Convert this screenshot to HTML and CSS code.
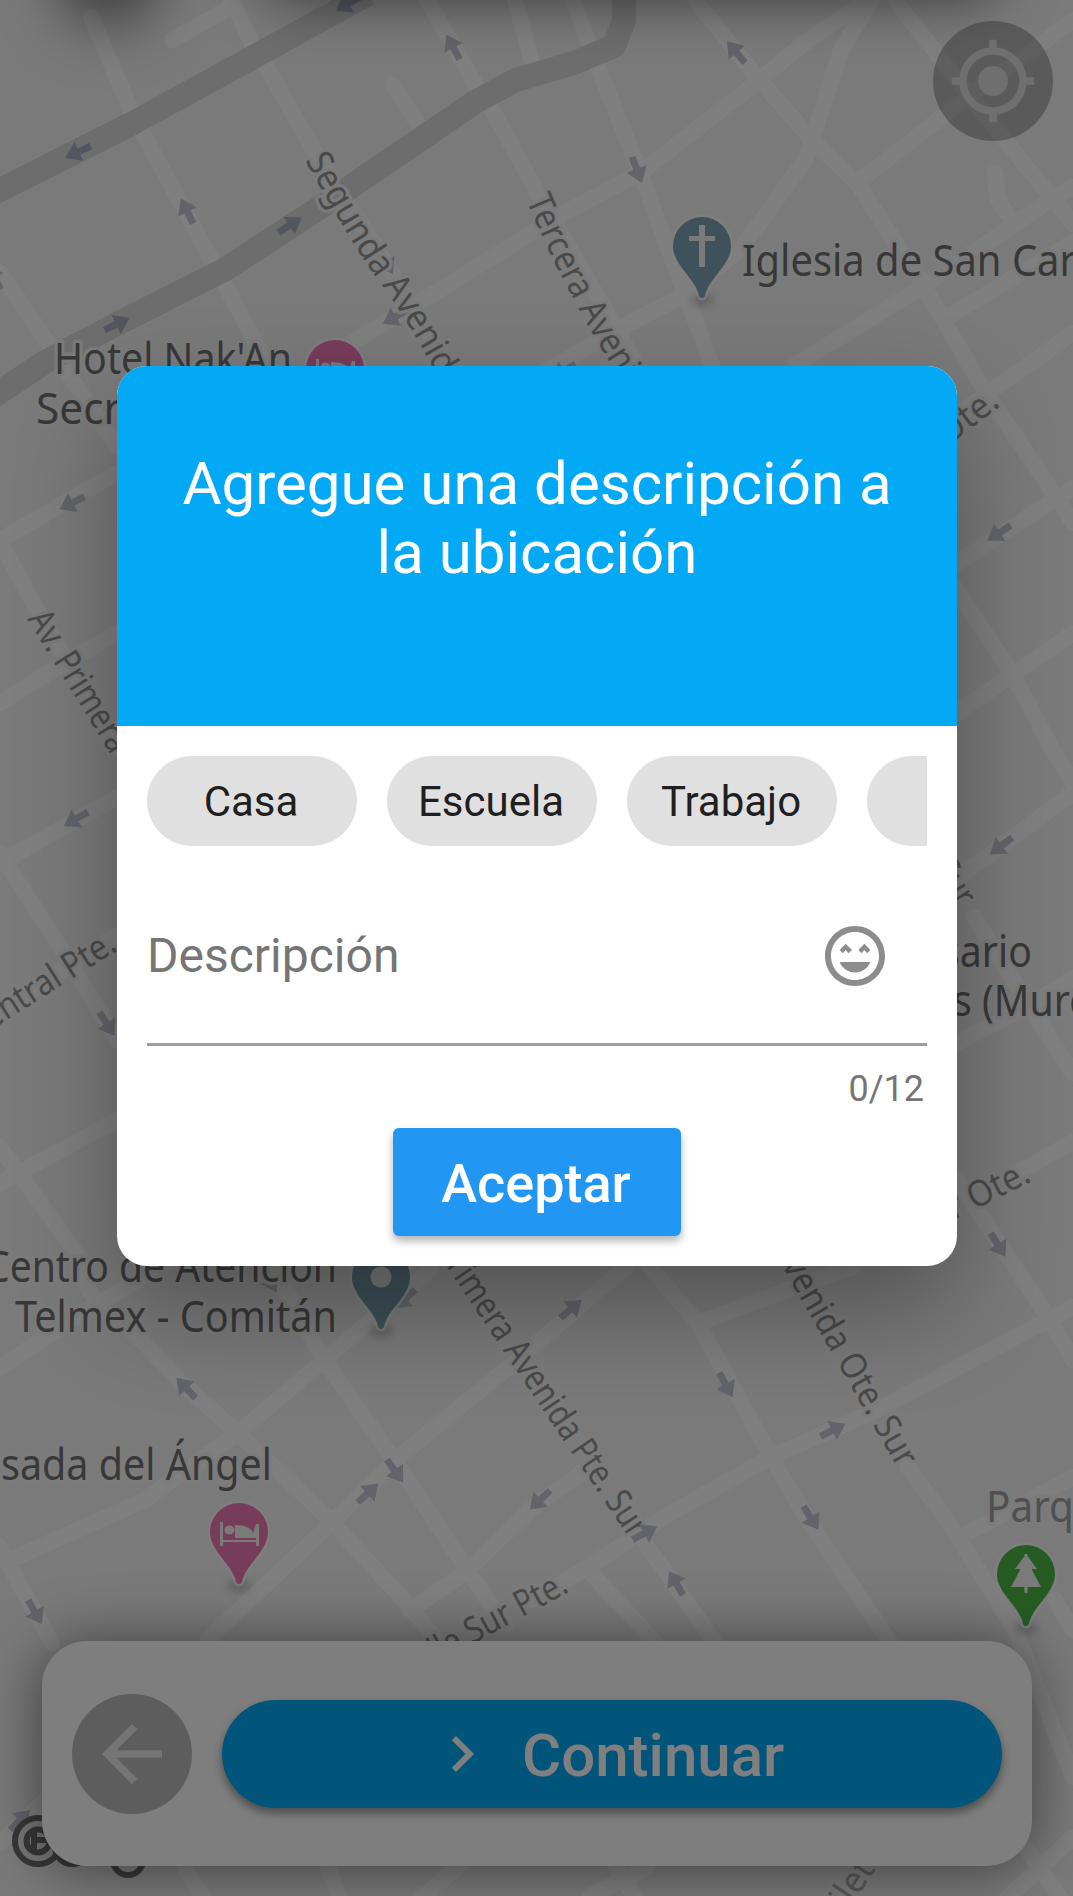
FILE: index.html
```html
<!DOCTYPE html>
<html lang="es">
<head>
<meta charset="utf-8">
<title>Agregar ubicación</title>
<link rel="stylesheet" href="styles.css">
</head>
<body>
<div class="screen">
  <svg class="map" viewBox="0 0 1073 1896" width="1073" height="1896">
    <defs>
      <path id="arrow" d="M-14-3.5H-1V-10.500L14 0L-1 10.500V3.500H-14z"/>
      <path id="pin" d="M0 0C-3 0-3-3-4-6C-10-22-29-34-29-52A29 29 0 0 1 29-52C29-34 10-22 4-6C3-3 3 0 0 0z"/>
      <path id="bed" d="M-19-62h3v18h33v-16h3v22h-3v-4h-33v4h-3zM-4-59c10 0 17 3 18 8l3-9v14H-4zM-14.500-54a5 4.500 0 1 0 10 0a5 4.500 0 1 0-10 0z"/>
      <path id="s1" d="M305 160Q351 244 380 283T438 377"/>
      <path id="s2" d="M526 200Q565 292 616 372L640 409"/>
      <path id="s3" d="M27 619L111 755L132 789"/>
      <path id="s4" d="M-9 1030L121 948"/>
      <path id="s5" d="M948 446L1008 400"/>
      <path id="s6" d="M932 868L962 916"/>
      <path id="s7" d="M936 1229L1040 1177"/>
      <path id="s8" d="M436 1251L633 1544"/>
      <path id="s9" d="M771 1247L902 1476"/>
      <path id="s10" d="M404 1681L580 1586"/>
      <path id="s11" d="M848 1911L890 1848"/>
    </defs>
    <g class="roads">
      <path d="M91 17L133 115L218 272L265 360M172 40L231 7M231 0L253 45L267 68L315 152L375 245L445 360"/>
      <path d="M392 84L417 122M427 0L477 87L491 108L540 197L640 370M515 0L532 62M0 272L48 343L117 447"/>
      <path d="M320 362L348 345L420 302L564 213L640 173L757 82L808 40L860 5"/>
      <path d="M872 0L841 50L814 133L805 160L740 250L681 297L622 327L540 375"/>
      <path d="M573 0L598 67L643 180L681 283L712 365M695 0L757 77L812 140L857 183L922 283L984 390L1056 497L1073 523"/>
      <path d="M895 0L991 123L1051 197L1073 224M1073 20L960 103L857 183M995 173L998 200L1010 217"/>
      <path d="M1073 187L1050 200L922 287L795 365M1073 242L946 318M1073 333L1025 367L957 415"/>
      <path d="M957 563L1049 503L1073 488M950 580L1012 673L1050 745L1073 783M957 713L1015 673L1073 633"/>
      <path d="M957 878L1073 793M974 917L1036 1017L1073 1073M957 1043L1030 1005L1073 978"/>
      <path d="M0 540L117 473M3 547L36 608L120 750M0 703L58 667L117 633M0 863L117 797M0 853L62 950L117 1040M0 1010L117 935"/>
      <path d="M0 1183L117 1120M0 1147L22 1177L76 1253L90 1293L134 1333L186 1387L238 1433L327 1517L413 1610L440 1645"/>
      <path d="M0 1367L83 1313L180 1255M10 1560L145 1500L238 1433L324 1360L430 1270M275 1270L324 1360L399 1467L465 1567L505 1625"/>
      <path d="M0 1547L10 1567L52 1643M207 1640L324 1530L399 1457L517 1360L626 1267M410 1610L465 1573L530 1510L585 1470"/>
      <path d="M650 1267L698 1323L771 1457L808 1520L890 1642M698 1323L788 1290L853 1267"/>
      <path d="M1073 1307L877 1410L771 1457L664 1517L588 1567L533 1600M957 1180L1050 1320L1073 1360M1022 1170L1073 1142"/>
      <path d="M908 1467L940 1510L960 1540L1015 1630L1073 1777M960 1537L998 1517L1073 1477M588 1570L655 1642M643 1540L715 1642M1055 1600L1073 1630"/>
      <path d="M186 1870L205 1900M325 1860L341 1900M420 1900L463 1862M590 1896L646 1868M615 1865L636 1900M1005 1900L1073 1837M1025 1847L1062 1900M0 1843L45 1800"/>
    </g>
    <g class="highways">
      <path d="M-10 195L0 190L133 123L248 60L368-6"/>
      <path d="M-10 398L0 392L45 362L117 324L224 270L327 203L475 102L516 80L574 63L614 46L624 20V-5"/>
    </g>
    <g class="arrows">
      <use href="#arrow" transform="translate(78 152) rotate(155)"/>
      <use href="#arrow" transform="translate(348 4) rotate(150)"/>
      <use href="#arrow" transform="translate(290 225) rotate(-33)"/>
      <use href="#arrow" transform="translate(117 324) rotate(-26)"/>
      <g class="light">
      <use href="#arrow" transform="translate(453 47) rotate(-118)"/>
      <use href="#arrow" transform="translate(187 211) rotate(-116)"/>
      <use href="#arrow" transform="translate(-6 277) rotate(-118)"/>
      <use href="#arrow" transform="translate(386 262) rotate(60)"/>
      <use href="#arrow" transform="translate(395 317) rotate(150)"/>
      <use href="#arrow" transform="translate(736 52) rotate(-130)"/>
      <use href="#arrow" transform="translate(637 170) rotate(69)"/>
      <use href="#arrow" transform="translate(563 371) rotate(152)"/>
      <use href="#arrow" transform="translate(72 503) rotate(153)"/>
      <use href="#arrow" transform="translate(999 533) rotate(147)"/>
      <use href="#arrow" transform="translate(76 819) rotate(150)"/>
      <use href="#arrow" transform="translate(107 1024) rotate(57)"/>
      <use href="#arrow" transform="translate(1001 846) rotate(143)"/>
      <use href="#arrow" transform="translate(186 1388) rotate(-133)"/>
      <use href="#arrow" transform="translate(395 1471) rotate(54)"/>
      <use href="#arrow" transform="translate(368 1493) rotate(-43)"/>
      <use href="#arrow" transform="translate(405 1299) rotate(137)"/>
      <use href="#arrow" transform="translate(270 1280) rotate(62)"/>
      <use href="#arrow" transform="translate(571 1309) rotate(-40)"/>
      <use href="#arrow" transform="translate(726 1385) rotate(61)"/>
      <use href="#arrow" transform="translate(833 1430) rotate(-27)"/>
      <use href="#arrow" transform="translate(540 1500) rotate(137)"/>
      <use href="#arrow" transform="translate(998 1245) rotate(58)"/>
      <use href="#arrow" transform="translate(811 1518) rotate(57)"/>
      <use href="#arrow" transform="translate(676 1583) rotate(-120)"/>
      <use href="#arrow" transform="translate(35 1612) rotate(60)"/>
      <use href="#arrow" transform="translate(20 1820) rotate(-45)"/>
      </g>
    </g>
    <g class="street-names">
      <text><textPath href="#s1" textLength="254" lengthAdjust="spacingAndGlyphs">Segunda Avenid</textPath></text>
      <text><textPath href="#s2" textLength="204" lengthAdjust="spacingAndGlyphs">Tercera Aveni</textPath></text>
      <text><textPath href="#s3" textLength="160" lengthAdjust="spacingAndGlyphs">Av. Primera</textPath></text>
      <text><textPath href="#s4" textLength="151" lengthAdjust="spacingAndGlyphs">entral Pte.</textPath></text>
      <text><textPath href="#s5" textLength="67" lengthAdjust="spacingAndGlyphs">Ote.</textPath></text>
      <text><textPath href="#s6" textLength="48" lengthAdjust="spacingAndGlyphs">Sur</textPath></text>
      <text><textPath href="#s7" textLength="108" lengthAdjust="spacingAndGlyphs">ur Ote.</textPath></text>
      <text><textPath href="#s8" textLength="348" lengthAdjust="spacingAndGlyphs">Primera Avenida Pte. Sur</textPath></text>
      <text><textPath href="#s9" textLength="256" lengthAdjust="spacingAndGlyphs">Avenida Ote. Sur</textPath></text>
      <text><textPath href="#s10" textLength="189" lengthAdjust="spacingAndGlyphs">Calle Sur Pte.</textPath></text>
      <text class="faint"><textPath href="#s11" textLength="50" lengthAdjust="spacingAndGlyphs">ilet</textPath></text>
    </g>
    <g class="arrows light"><use href="#arrow" transform="translate(645 1533) rotate(-28)"/></g>
    <g class="place-names">
      <text x="54" y="374" textLength="238" lengthAdjust="spacingAndGlyphs">Hotel Nak'An</text>
      <text x="36" y="424" textLength="85" lengthAdjust="spacingAndGlyphs">Secr</text>
      <text x="742" y="276" textLength="334" lengthAdjust="spacingAndGlyphs">Iglesia de San Car</text>
      <text x="941" y="967" textLength="91" lengthAdjust="spacingAndGlyphs">sario</text>
      <text x="953" y="1016" textLength="135" lengthAdjust="spacingAndGlyphs">s (Murc</text>
      <text x="-15" y="1282" textLength="352" lengthAdjust="spacingAndGlyphs">Centro de Atención</text>
      <text x="15" y="1332" textLength="322" lengthAdjust="spacingAndGlyphs">Telmex - Comitán</text>
      <text x="1" y="1480" textLength="271" lengthAdjust="spacingAndGlyphs">sada del Ángel</text>
      <text class="park" x="986" y="1522" textLength="88" lengthAdjust="spacingAndGlyphs">Parq</text>
    </g>
    <g class="pin-shadows">
      <ellipse cx="702" cy="300" rx="12" ry="6"/><ellipse cx="381" cy="1331" rx="12" ry="6"/>
      <ellipse cx="239" cy="1586" rx="12" ry="6"/><ellipse cx="1026" cy="1628" rx="12" ry="6"/>
    </g>
    <g class="pins">
      <g transform="translate(702 298)"><use class="civic" href="#pin"/><path class="glyph" d="M-3-73h6v11h10v5H3v26h-6v-26h-10v-5h10z"/></g>
      <g transform="translate(335 421)"><use class="lodging" href="#pin"/><use class="glyph" href="#bed"/></g>
      <g transform="translate(381 1329)"><use class="civic" href="#pin"/><circle class="glyph" cy="-52" r="10.500"/></g>
      <g transform="translate(239 1584)"><use class="lodging" href="#pin"/><use class="glyph" href="#bed"/></g>
      <g transform="translate(1026 1626)"><use class="nature" href="#pin"/><path class="glyph" d="M-1.500-72h3v2L11-57H5.500L15-39H1.500v6h-3v-6H-15L-5.500-57H-11L-1.500-70z"/></g>
    </g>
    <g class="watermark">
      <circle class="halo" cx="38" cy="1841" r="26"/>
      <circle cx="38" cy="1841" r="23"/><circle cx="38" cy="1841" r="11.500"/>
      <path d="M50 1840H36M34 1831V1851"/>
      <circle cx="72" cy="1847" r="17"/><circle cx="128" cy="1860" r="15"/>
    </g>
  </svg>

  <div class="top-shadows"><span class="menu-shadow"></span><span class="search-shadow"></span></div>

  <div class="controls">
    <button class="round locate" aria-label="Mi ubicación">
      <svg viewBox="0 0 24 24"><path d="M12 8c-2.210 0-4 1.790-4 4s1.790 4 4 4 4-1.790 4-4-1.790-4-4-4zm8.940 3c-.46-4.170-3.770-7.480-7.940-7.940V1h-2v2.060C6.830 3.520 3.520 6.830 3.060 11H1v2h2.060c.46 4.170 3.770 7.480 7.940 7.940V23h2v-2.060c4.170-.46 7.480-3.770 7.940-7.940H23v-2h-2.060zM12 19c-3.870 0-7-3.130-7-7s3.130-7 7-7 7 3.130 7 7-3.130 7-7 7z"/></svg>
    </button>
    <div class="bottom-card">
      <button class="round back" aria-label="Atrás">
        <svg viewBox="0 0 24 24"><path d="M20 11H7.830l5.590-5.590L12 4l-8 8 8 8 1.410-1.410L7.830 13H20v-2z"/></svg>
      </button>
      <button class="continue">
        <svg viewBox="0 0 24 24"><path d="M8.590 16.590L13.170 12 8.590 7.410 10 6l6 6-6 6-1.410-1.410z"/></svg>
        <span>Continuar</span>
      </button>
    </div>
  </div>

  <div class="scrim">
    <div class="dialog">
      <header class="dialog-head"><h1>Agregue una descripción a la ubicación</h1></header>
      <div class="dialog-body">
        <div class="chips"><span class="chip">Casa</span><span class="chip">Escuela</span><span class="chip">Trabajo</span><span class="chip"></span></div>
        <div class="field">
          <span class="hint">Descripción</span>
          <svg viewBox="0 0 24 24"><path d="M11.990 2C6.470 2 2 6.480 2 12s4.470 10 9.990 10C17.510 22 22 17.520 22 12S17.520 2 11.990 2zM12 20c-4.420 0-8-3.580-8-8s3.580-8 8-8 8 3.580 8 8-3.580 8-8 8zM7.940 11.060L8.880 10l.94 1.060L11 10 8.880 7.940 6.880 10zM13.120 10l1.060 1.060L15.120 10l.94 1.060L17.120 10l-2-2.060zM12 17.500c2.330 0 4.310-1.460 5.110-3.500H6.890c.8 2.040 2.780 3.500 5.110 3.500z"/></svg>
        </div>
        <div class="counter">0/12</div>
        <button class="accept">Aceptar</button>
      </div>
    </div>
  </div>
</div>
</body>
</html>
```
FILE: styles.css
```css
* { box-sizing: border-box; }
body { margin: 0; font-family: Roboto, "Liberation Sans", sans-serif; }
button { border: 0; padding: 0; font: inherit; }
h1 { margin: 0; }

/* The map, its controls and the dialog share one grid cell, stacked in order. */
.screen { display: grid; width: 1073px; height: 1896px; overflow: hidden; }
.screen > * { grid-area: 1 / 1; }

.map { display: block; background: #f4f4f4; }
.roads path { fill: none; stroke: #fff; stroke-width: 16; stroke-linecap: round; stroke-linejoin: round; }
.highways path { fill: none; stroke: #dadada; stroke-width: 24; stroke-linejoin: round; }
.arrows { fill: #a9adbf; }
.light { fill: #c6c8d6; }
.street-names, .place-names {
  font-family: "Noto Sans", "Open Sans", sans-serif;
  paint-order: stroke;
  stroke: #f7f7f7;
  stroke-width: 7;
  stroke-linejoin: round;
}
.street-names { font-size: 36px; fill: #949494; }
.street-names .faint { fill: #b0b0b0; }
.place-names { font-size: 44px; fill: #707070; }
.place-names .park { fill: #a0a0a0; }
.pin-shadows ellipse { fill: rgba(0, 0, 0, .2); filter: blur(4px); }
.pins use:first-child { stroke: #fff; stroke-opacity: .7; stroke-width: 5; paint-order: stroke; }
.civic { fill: #7ea3b4; }
.lodging { fill: #f078b6; }
.nature { fill: #4cb844; }
.pins .glyph { fill: #f5f5f5; stroke: none; }
.watermark { fill: none; stroke: #707070; stroke-width: 6; }
.watermark .halo { fill: #f0f0f0; stroke: none; }

.top-shadows { display: flex; gap: 110px; height: 90px; margin-top: -91px; padding-left: 72px; }
.menu-shadow { width: 72px; height: 90px; border-radius: 45px; box-shadow: 0 12px 60px 12px rgba(0, 0, 0, .55); }
.search-shadow { width: 750px; height: 90px; border-radius: 45px; box-shadow: 0 0 55px rgba(0, 0, 0, .55); }

.controls { display: flex; flex-direction: column; justify-content: space-between; align-items: flex-end; padding: 21px 20px 30px 42px; }
.round { display: grid; place-items: center; flex: none; width: 120px; height: 120px; border-radius: 50%; background: rgba(0, 0, 0, .26); }
.round svg { width: 90px; height: 90px; fill: #dedede; }
.back svg { fill: #ebebeb; }
.bottom-card {
  display: flex;
  align-items: center;
  gap: 30px;
  width: 990px;
  height: 225px;
  margin-right: 21px;
  padding: 0 30px;
  border-radius: 45px;
  background: #fcfcfc;
  box-shadow: 0 3px 60px rgba(0, 0, 0, .52);
}
.continue {
  display: flex;
  align-items: center;
  gap: 24px;
  width: 780px;
  height: 108px;
  padding-left: 204px;
  border-radius: 54px;
  background: #03a9f4;
  box-shadow: 0 5px 10px rgba(0, 0, 0, .4);
  color: #fff;
  font-size: 60px;
  font-weight: 500;
}
.continue svg { width: 72px; height: 72px; fill: #fff; }
.continue span { padding-top: 3px; }

.scrim { display: flex; align-items: flex-start; justify-content: center; padding: 366px 116px 0 117px; background: rgba(0, 0, 0, .5); z-index: 1; }
.dialog {
  width: 840px;
  height: 900px;
  border-radius: 30px;
  overflow: hidden;
  background: #fff;
  box-shadow: 0 45px 100px rgba(0, 0, 0, .32);
}
.dialog-head { height: 360px; padding: 83px 60px 0; background: #03a9f5; color: #fff; text-align: center; }
.dialog-head h1 { font-size: 60px; line-height: 69px; font-weight: 400; }
.dialog-body { display: flex; flex-direction: column; padding: 30px; }
.chips { display: flex; gap: 30px; overflow: hidden; }
.chip { display: flex; flex: none; align-items: center; justify-content: center; width: 210px; height: 90px; padding-right: 2px; border-radius: 45px; background: #e0e0e0; color: #1f1f1f; font-size: 42px; }
.field { display: flex; align-items: center; justify-content: space-between; height: 200px; padding: 22px 36px 0 0; border-bottom: 3px solid #9e9e9e; color: #757575; font-size: 48px; }
.field svg { width: 72px; height: 72px; fill: #8c8c8c; }
.counter { height: 82px; padding: 22px 3px 0 0; text-align: right; color: #757575; font-size: 36px; line-height: 42px; }
.accept { align-self: center; width: 288px; height: 108px; padding: 2px 2px 0 0; border-radius: 6px; background: #2196f3; box-shadow: 0 5px 8px rgba(0, 0, 0, .3); color: #fff; font-size: 54px; font-weight: 500; }
```
